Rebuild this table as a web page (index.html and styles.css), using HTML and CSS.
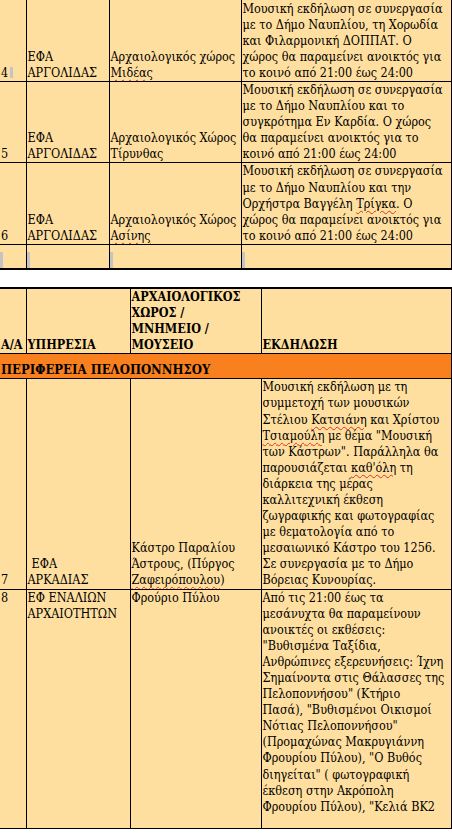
FILE: index.html
```html
<!DOCTYPE html>
<html>
<head>
<meta charset="utf-8">
<link rel="stylesheet" href="styles.css">
</head>
<body>
<table class="sheet sheet-top">
  <colgroup><col class="c1"><col class="c2"><col class="c3"><col class="c4"></colgroup>
  <tr class="r-first">
    <td class="num">4<span class="mark"></span></td>
    <td>ΕΦΑ<br>ΑΡΓΟΛΙΔΑΣ</td>
    <td>Αρχαιολογικός χώρος<br><span class="sp">Μιδέας</span></td>
    <td>Μουσική εκδήλωση σε συνεργασία<br>με το Δήμο Ναυπλίου, τη Χορωδία<br>και Φιλαρμονική ΔΟΠΠΑΤ. Ο<br>χώρος θα παραμείνει ανοικτός για<br>το κοινό από 21:00 έως 24:00</td>
  </tr>
  <tr>
    <td class="num"><span class="mark mark-l"></span>5</td>
    <td>ΕΦΑ<br>ΑΡΓΟΛΙΔΑΣ</td>
    <td>Αρχαιολογικός Χώρος<br>Τίρυνθας</td>
    <td>Μουσική εκδήλωση σε συνεργασία<br>με το Δήμο Ναυπλίου και το<br>συγκρότημα Εν Καρδία. Ο χώρος<br>θα παραμείνει ανοικτός για το<br>κοινό από 21:00 έως 24:00</td>
  </tr>
  <tr>
    <td class="num"><span class="mark mark-l"></span>6</td>
    <td>ΕΦΑ<br>ΑΡΓΟΛΙΔΑΣ</td>
    <td>Αρχαιολογικός Χώρος<br><span class="sp">Ασίνης</span></td>
    <td>Μουσική εκδήλωση σε συνεργασία<br>με το Δήμο Ναυπλίου και την<br>Ορχήστρα Βαγγέλη <span class="sp">Τρίγκα</span>. Ο<br>χώρος θα παραμείνει ανοικτός για<br>το κοινό από 21:00 έως 24:00</td>
  </tr>
  <tr class="r-empty">
    <td><span class="mark mark-tall"></span></td>
    <td><span class="mark mark-tall"></span></td>
    <td><span class="mark mark-tall"></span></td>
    <td><span class="mark mark-tall"></span></td>
  </tr>
</table>

<table class="sheet sheet-bottom">
  <colgroup><col class="d1"><col class="d2"><col class="d3"><col class="d4"></colgroup>
  <tr class="r-head">
    <th>Α/Α</th>
    <th>ΥΠΗΡΕΣΙΑ</th>
    <th>ΑΡΧΑΙΟΛΟΓΙΚΟΣ<br>ΧΩΡΟΣ /<br>ΜΝΗΜΕΙΟ /<br>ΜΟΥΣΕΙΟ</th>
    <th>ΕΚΔΗΛΩΣΗ</th>
  </tr>
  <tr class="r-region">
    <th colspan="4">ΠΕΡΙΦΕΡΕΙΑ ΠΕΛΟΠΟΝΝΗΣΟΥ</th>
  </tr>
  <tr>
    <td class="num num-7">7</td>
    <td><span class="indent">ΕΦΑ</span><br>ΑΡΚΑΔΙΑΣ</td>
    <td>Κάστρο Παραλίου<br>Άστρους, (Πύργος<br><span class="sp">Ζαφειρόπουλου</span>)</td>
    <td>Μουσική εκδήλωση με τη<br>συμμετοχή των μουσικών<br>Στέλιου <span class="sp">Κατσιάνη</span> και Χρίστου<br><span class="sp">Τσιαμούλη</span> με θέμα "Μουσική<br>των Κάστρων". Παράλληλα θα<br>παρουσιάζεται <span class="sp">καθ'όλη</span> τη<br>διάρκεια της μέρας<br>καλλιτεχνική έκθεση<br>ζωγραφικής και φωτογραφίας<br>με θεματολογία από το<br>μεσαιωνικό Κάστρο του 1256.<br>Σε συνεργασία με το Δήμο<br>Βόρειας Κυνουρίας.</td>
  </tr>
  <tr class="r-top">
    <td class="num">8</td>
    <td>ΕΦ ΕΝΑΛΙΩΝ<br>ΑΡΧΑΙΟΤΗΤΩΝ</td>
    <td>Φρούριο Πύλου</td>
    <td>Από τις 21:00 έως τα<br>μεσάνυχτα θα παραμείνουν<br>ανοικτές οι εκθέσεις:<br>"Βυθισμένα Ταξίδια,<br>Ανθρώπινες εξερευνήσεις: Ίχνη<br>Σημαίνοντα στις Θάλασσες της<br>Πελοποννήσου" (Κτήριο<br>Πασά), "Βυθισμένοι Οικισμοί<br>Νότιας Πελοποννήσου"<br>(Προμαχώνας Μακρυγιάννη<br>Φρουρίου Πύλου), "Ο Βυθός<br>διηγείται" ( φωτογραφική<br>έκθεση στην Ακρόπολη<br>Φρουρίου Πύλου), "Κελιά ΒΚ2</td>
  </tr>
</table>
</body>
</html>
```

FILE: styles.css
```css
html, body {
  margin: 0;
  padding: 0;
  background: #ffffff;
}

body {
  font-family: "DejaVu Serif Condensed", "DejaVu Serif", serif;
  font-size: 12.5px;
  color: #000000;
}

.sheet {
  border-collapse: collapse;
  table-layout: fixed;
  width: 451px;
  background: #ffdf9f;
  font-family: "DejaVu Serif Condensed", "DejaVu Serif", serif;
  font-stretch: condensed;
  font-size: 12.5px;
}

.sheet td,
.sheet th {
  border: 1px solid #000000;
  padding: 0 0 0 1px;
  line-height: 16.1px;
  vertical-align: bottom;
  text-align: left;
  white-space: nowrap;
  overflow: hidden;
}

.sheet tr > :first-child {
  border-left: none;
}

.sheet-top .c1 { width: 26px; }
.sheet-top .c2 { width: 83px; }
.sheet-top .c3 { width: 132px; }
.sheet-top .c4 { width: 210px; }

.sheet-top .r-first td {
  border-top: none;
  height: 81px;
}

.sheet-top .r-empty td {
  height: 23px;
  border-bottom-width: 2px;
}

.sheet-bottom {
  margin-top: 17px;
  border-top: 2px solid #000000;
}

.sheet-bottom .d1 { width: 26px; }
.sheet-bottom .d2 { width: 104px; }
.sheet-bottom .d3 { width: 131px; }
.sheet-bottom .d4 { width: 190px; }

.sheet-bottom th {
  font-weight: bold;
}

.r-head th {
  border-top: 2px solid #000000;
}

.r-region th {
  background: #f8801f;
  height: 24px;
  font-size: 13px;
}

.r-top td {
  vertical-align: top;
  height: 238px;
}

.num {
  padding-left: 5px;
}

.num-7 {
  padding-left: 7px;
}

.r-top .num {
  padding-left: 1px;
}

.indent {
  padding-left: 4px;
}

.mark {
  display: inline-block;
  width: 3px;
  height: 11px;
  background: #c4c4c4;
  margin-left: 2px;
  vertical-align: -1px;
}

.mark-l {
  margin-left: -5px;
  margin-right: 2px;
}

.r-empty td {
  padding-left: 0;
  vertical-align: bottom;
}

.mark-tall {
  height: 16px;
  margin-left: 0;
  vertical-align: bottom;
  display: block;
}

.sp {
  text-decoration: underline wavy #e03020;
  text-decoration-thickness: 1px;
  text-underline-offset: 2px;
}
```
